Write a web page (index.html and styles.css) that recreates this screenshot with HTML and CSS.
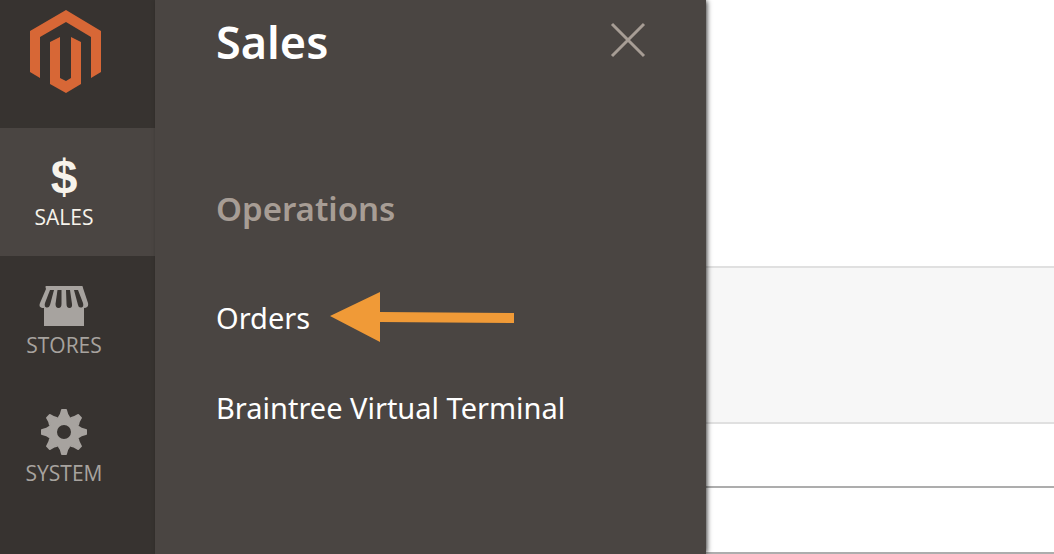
FILE: index.html
```
<!DOCTYPE html>
<html lang="en">
<head>
  <meta charset="UTF-8">
  <title>Sales</title>
  <link rel="stylesheet" href="styles.css">
</head>
<body>
  <nav class="menu">
    <a class="logo" href="#" aria-label="Dashboard">
      <svg width="72" height="84" viewBox="0 0 72 84" fill="#d76736">
        <path d="M36 0 71 21V62L61 68V27L36 12 10 27V68L0 62V21Z"/>
        <path d="M30 27V68L36 71 41 68V27L51 32V74L36 83 20 74V32Z"/>
      </svg>
    </a>
    <a class="menu-item active" href="#">
      <span class="icon dollar" aria-hidden="true">$</span>
      <span class="label">SALES</span>
    </a>
    <a class="menu-item" href="#">
      <span class="icon">
        <svg width="50" height="46" viewBox="0 -2 50 46" fill="#a7a39f">
          <path d="M7 3H43Q44 3 44 5L49 20Q50 25 45 25V43H5V25Q-1 25 1 20L7 6Q6 3 7 3Z"/>
          <g fill="#373330">
            <path d="M11 7H15L11 22Q10 25 7.500 24.500Q5 24 6 20Z"/>
            <path d="M18.500 7H22.500V21Q22.500 25 19.500 25Q16.500 25 16.500 21Z"/>
            <path d="M27 7H31L33 21Q33.500 25 30.500 25Q27.500 25 27.500 21Z"/>
            <path d="M35 7H39L44 20Q45 24 42.500 24.500Q39.500 25 39 22Z"/>
          </g>
        </svg>
      </span>
      <span class="label">STORES</span>
    </a>
    <a class="menu-item" href="#">
      <span class="icon">
        <svg width="46" height="46" viewBox="-23 -23 46 46" fill="#a7a39f">
          <g id="teeth">
            <path id="tooth" d="M-6-15Q-4-17-3-22Q-3-23-2-23H2Q3-23 3-22Q4-17 6-15Z"/>
            <use href="#tooth" transform="rotate(45)"/>
            <use href="#tooth" transform="rotate(90)"/>
            <use href="#tooth" transform="rotate(135)"/>
          </g>
          <use href="#teeth" transform="rotate(180)"/>
          <path fill-rule="evenodd" d="M-16 0A16 16 0 1 1 16 0A16 16 0 1 1-16 0ZM-7 0A7 7 0 1 0 7 0A7 7 0 1 0-7 0Z"/>
        </svg>
      </span>
      <span class="label">SYSTEM</span>
    </a>
  </nav>

  <section class="submenu">
    <header class="submenu-head">
      <h1>Sales</h1>
      <button class="close" type="button" aria-label="Close">
        <svg width="36" height="36" viewBox="0 0 36 36" stroke="#a79d95" stroke-width="3">
          <path d="M2 2 34 34M34 2 2 34"/>
        </svg>
      </button>
    </header>
    <h2>Operations</h2>
    <ul>
      <li>
        <a href="#">Orders</a>
        <svg class="arrow" width="184" height="50" viewBox="0 0 184 50" fill="#f09a37">
          <path d="M0 24 50 0V20L184 21V31L50 30V50Z"/>
        </svg>
      </li>
      <li><a href="#">Braintree Virtual Terminal</a></li>
    </ul>
  </section>

  <main class="page">
    <div class="page-top"></div>
    <div class="band"></div>
    <div class="row"></div>
    <div class="row"></div>
  </main>
</body>
</html>
```
FILE: styles.css
```
* {
  box-sizing: border-box;
}

body {
  margin: 0;
  min-height: 100vh;
  display: flex;
  overflow: hidden;
  font-family: "Noto Sans", "Open Sans", sans-serif;
  background: #fff;
}

a {
  color: inherit;
  text-decoration: none;
}

svg {
  display: block;
}

.menu {
  flex: 0 0 155px;
  background: #373330;
}

.logo {
  display: block;
  height: 128px;
  padding: 10px 30px;
}

.menu-item {
  display: flex;
  flex-direction: column;
  align-items: center;
  height: 128px;
  padding: 22px 27px 0 0;
  color: #a7a39f;
}

.menu-item.active {
  background: #4a4542;
  color: #f7f3eb;
}

.icon {
  display: flex;
  align-items: center;
  height: 52px;
}

.dollar {
  font: bold 48px "Liberation Sans", sans-serif;
}

.label {
  font-family: "Open Sans", sans-serif;
  font-size: 21px;
  line-height: 30px;
}

.submenu {
  flex: 0 0 551px;
  padding: 0 60px 0 61px;
  background: #4a4542;
  color: #fff;
  box-shadow: 2px 0 5px -1px rgba(0, 0, 0, 0.8);
  z-index: 1;
}

.submenu-head {
  display: flex;
  justify-content: space-between;
  align-items: flex-start;
  padding-top: 12px;
}

h1 {
  margin: 0;
  font-size: 45px;
  line-height: 60px;
  font-weight: 600;
}

.close {
  margin-top: 10px;
  padding: 0;
  border: 0;
  background: none;
  cursor: pointer;
}

h2 {
  margin: 114px 0 0;
  font-size: 33px;
  line-height: 46px;
  font-weight: 600;
  color: #a79d95;
}

ul {
  margin: 60px 0 0;
  padding: 0;
  list-style: none;
}

li {
  display: flex;
  align-items: center;
  height: 50px;
  margin-bottom: 40px;
  font-size: 29px;
}

.arrow {
  margin-left: 20px;
}

.page {
  flex: 1;
}

.page-top {
  height: 266px;
}

.band {
  height: 158px;
  background: #f7f7f7;
  border: solid #e0e0e0;
  border-width: 2px 0;
}

.row {
  height: 64px;
  border-bottom: 2px solid #adadad;
}

.row:last-child {
  height: 66px;
}
```
